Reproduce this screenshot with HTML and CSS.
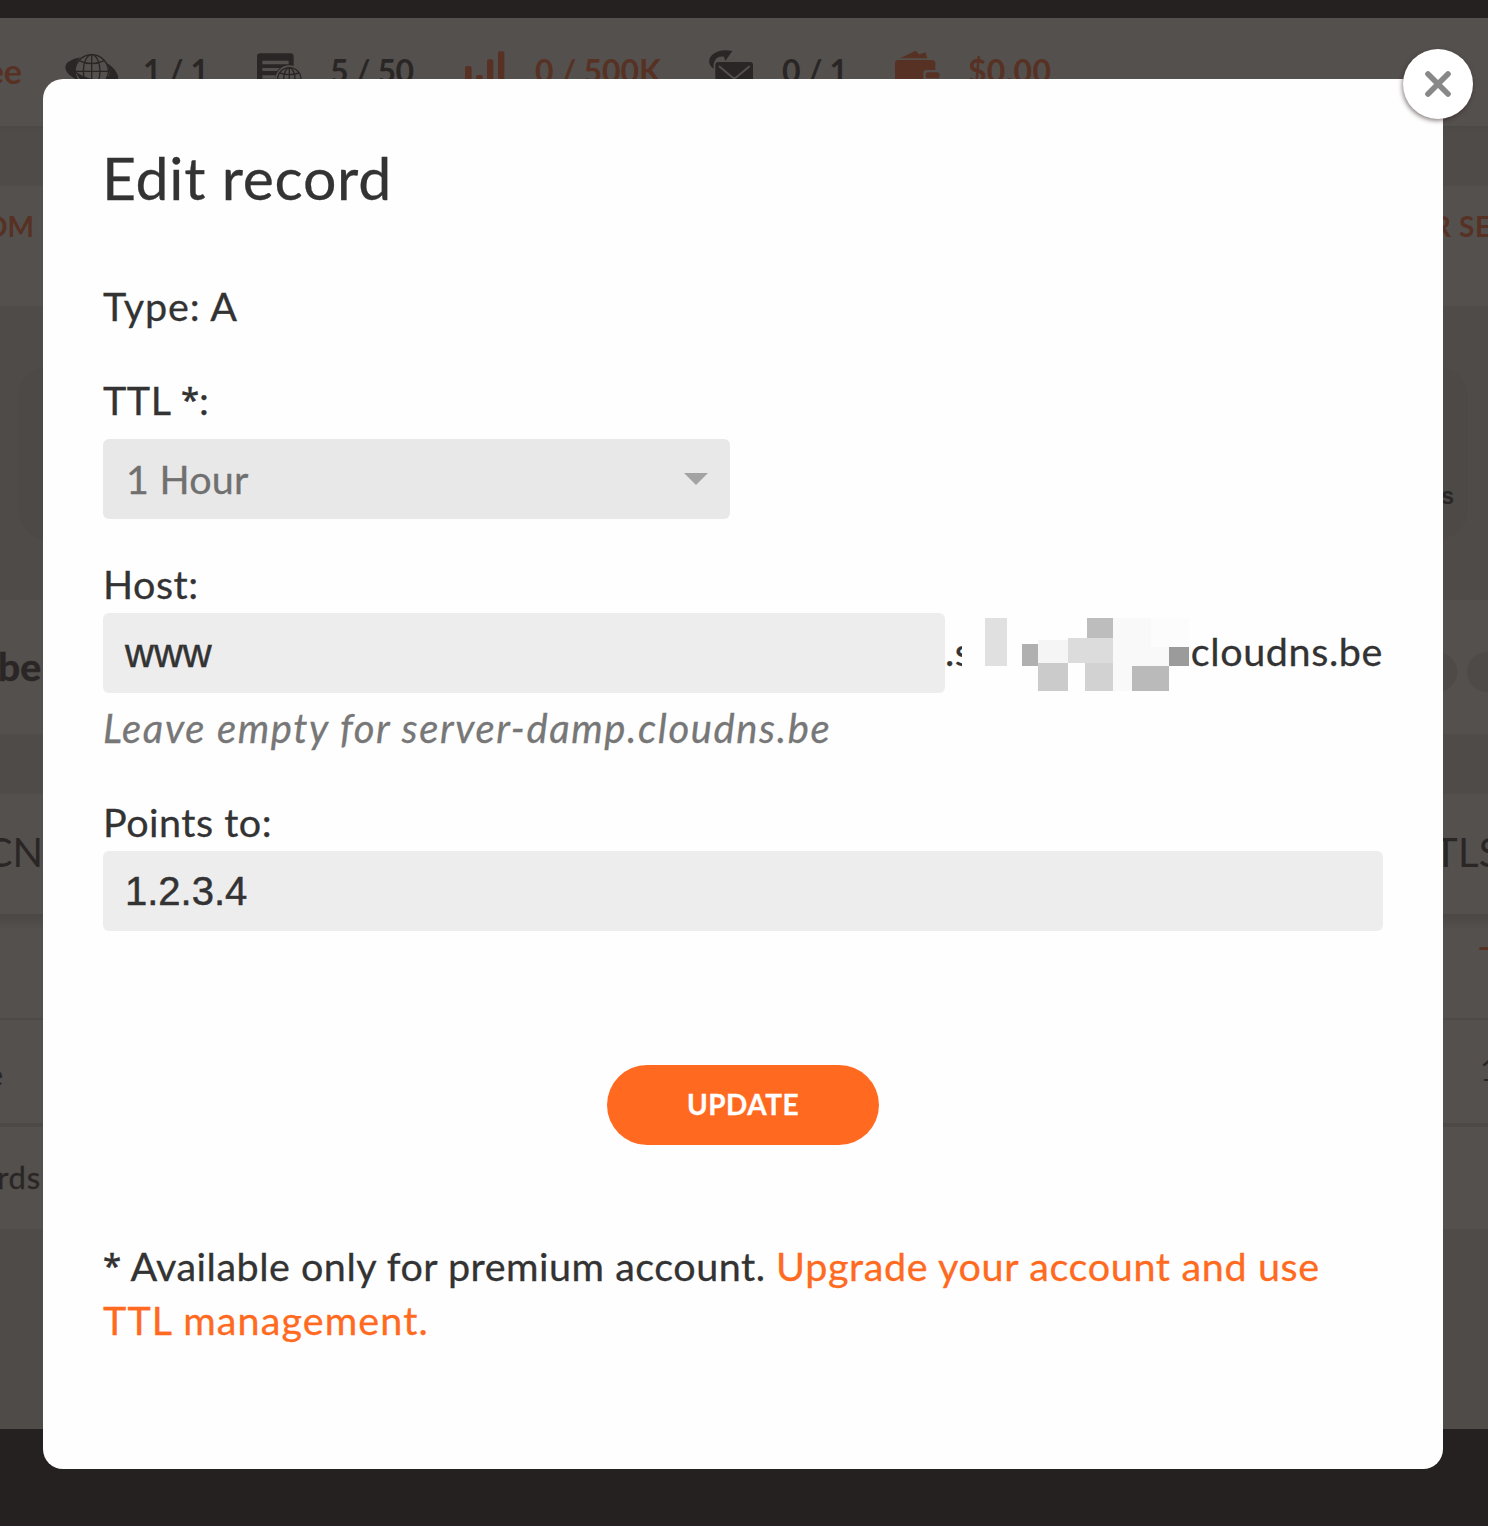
FILE: index.html
```
<!DOCTYPE html>
<html lang="en">
<head>
<meta charset="utf-8">
<title>Edit record</title>
<link rel="stylesheet" href="styles.css">
</head>
<body>
<div class="page">
  <div class="topbar"></div>
  <div class="status">
    <div class="plan accent">ee</div>
    <div class="stat stat-zones">
      <svg width="55" height="30" viewBox="195 150 165 90">
        <path class="fill" d="M242 172C215 177 195 188 196 203C198 219 214 231 230 238L236 250H350L355 232C352 215 338 200 321 190C328 204 329 216 327 228C300 236 250 232 226 214C224 198 230 182 242 172Z"/>
        <circle class="bg" cx="275" cy="214" r="48"/>
        <g class="line"><circle cx="275" cy="214" r="50"/><ellipse cx="275" cy="214" rx="25" ry="50"/><path d="M275 164V260M225 214H325M237 182Q275 200 313 182"/></g>
        <path class="fill" d="M223 210C238 226 262 235 285 238H240Z"/>
      </svg>
      <span>1 / 1</span>
    </div>
    <div class="stat stat-records">
      <svg width="45" height="30" viewBox="770 150 135 90">
        <rect class="fill" x="770" y="160" width="110" height="100" rx="10"/>
        <path class="gap" d="M786 182H865V193H786ZM786 204H838L830 213H786ZM786 226H826V236H786Z"/>
        <circle class="bg" cx="867" cy="238" r="42"/>
        <g class="line"><circle cx="867" cy="238" r="35"/><ellipse cx="867" cy="238" rx="17" ry="35"/><path d="M867 203V270M838 219Q867 229 896 219M832 238H902"/></g>
      </svg>
      <span>5 / 50</span>
    </div>
    <div class="stat stat-queries accent">
      <svg width="40" height="30" viewBox="75 150 120 90">
        <path class="fill" d="M75 260V203Q75 198 80 198H90Q95 198 95 203V260ZM108 260V230Q108 225 113 225H123Q128 225 128 230V260ZM141 260V183Q141 178 146 178H155Q160 178 160 183V260ZM174 260V159Q174 154 179 154H188Q193 154 193 159V260Z"/>
      </svg>
      <span>0 / 500K</span>
    </div>
    <div class="stat stat-mail">
      <svg width="45" height="30" viewBox="806 150 135 90">
        <path class="fill" d="M820 206C804 196 802 178 815 165C829 152 850 148 876 153L855 183L851 170C832 166 817 180 820 206Z"/>
        <rect class="fill" x="825" y="186" width="113" height="80" rx="9"/>
        <path class="fold" d="M838 200L876 232Q882 237 888 232L926 200"/>
      </svg>
      <span>0 / 1</span>
    </div>
    <div class="stat stat-balance accent">
      <svg width="45" height="30" viewBox="105 150 135 90">
        <path class="fill" d="M120 175L167 152L177 163L197 157L202 175Z"/>
        <rect class="fill" x="105" y="180" width="121" height="80" rx="10"/>
        <rect class="bg" x="190" y="210" width="56" height="50" rx="10"/>
        <rect class="fill" x="197" y="217" width="42" height="18" rx="8"/>
      </svg>
      <span>$0.00</span>
    </div>
  </div>
  <div class="band band-gap"></div>
  <div class="band band-links accent">
    <div class="edge left">OM</div>
    <div class="edge right">R SE</div>
  </div>
  <div class="band band-panel">
    <div class="panel"><span>s</span></div>
  </div>
  <div class="band band-zone">
    <div class="edge left">be</div>
    <div class="edge right"><i class="dot"></i><i class="dot"></i></div>
  </div>
  <div class="band band-space"></div>
  <div class="band band-tabs">
    <div class="edge left">CN</div>
    <div class="edge right">TLS</div>
  </div>
  <div class="band band-head accent"><i class="dash"></i></div>
  <div class="band band-row">
    <div class="edge left">e</div>
    <div class="edge right">1</div>
  </div>
  <div class="band band-total">
    <div class="edge left">rds</div>
  </div>
  <div class="band band-rest"></div>
  <div class="footer"></div>
</div>

<div class="modal">
  <button class="close" aria-label="Close">
    <svg width="28" height="28" viewBox="0 0 28 28"><path d="M4 4L24 24M24 4L4 24"/></svg>
  </button>
  <h1>Edit record</h1>
  <div class="text type">Type: A</div>
  <div class="text ttl">TTL <span class="star">*</span>:</div>
  <div class="select"><span>1 Hour</span><i class="arrow"></i></div>
  <div class="text host">Host:</div>
  <div class="host-row">
    <div class="input">www</div>
    <span class="domain-start">.s</span>
    <svg class="mosaic" width="227" height="73" viewBox="0 0 227 73" shape-rendering="crispEdges">
      <rect width="227" height="73" fill="#fefefe"/>
      <rect x="23" width="22" height="48" fill="#e0e0e0"/>
      <rect x="60" y="26" width="16" height="22" fill="#b0b0b0"/>
      <rect x="76" y="22" width="30" height="23" fill="#f5f5f5"/>
      <rect x="106" y="20" width="45" height="25" fill="#dcdcdc"/>
      <rect x="125" width="26" height="20" fill="#bdbdbd"/>
      <rect x="151" width="76" height="48" fill="#f9f9f9"/>
      <rect x="151" y="48" width="19" height="25" fill="#f9f9f9"/>
      <rect x="189" width="38" height="29" fill="#fcfcfc"/>
      <rect x="76" y="45" width="30" height="28" fill="#cbcbcb"/>
      <rect x="123" y="45" width="28" height="28" fill="#d2d2d2"/>
      <rect x="170" y="48" width="37" height="25" fill="#bababa"/>
      <rect x="207" y="29" width="20" height="19" fill="#9b9b9b"/>
    </svg>
    <span class="domain-end">cloudns.be</span>
  </div>
  <div class="hint">Leave empty for server-damp.cloudns.be</div>
  <div class="text points">Points to:</div>
  <div class="input address">1.2.3.4</div>
  <button class="update">UPDATE</button>
  <p class="note"><span class="star">*</span> Available only for premium account. <a>Upgrade your account and use<br><span class="last">TTL management.</span></a></p>
</div>
</body>
</html>
```
FILE: styles.css
```
* { box-sizing: border-box; }
body {
  margin: 0;
  font-family: Lato, "Liberation Sans", sans-serif;
  color: #333;
}
.page {
  --light: #54504e;
  --dark: #4f4b49;
  --ink: #2a2625;
  height: 1526px;
  overflow: hidden;
  display: flex;
  flex-direction: column;
  background: var(--dark);
  color: var(--ink);
}
.topbar { height: 18px; background: #252120; }
.footer { flex: 1; background: #252120; }
.accent { --ink: #573224; color: #573224; }

/* account status strip */
.status {
  height: 108px;
  padding-top: 32px;
  display: grid;
  grid-template-columns: 65px 192px 208px 244px 186px 1fr;
  background: var(--light);
  font-size: 32px;
  font-weight: 700;
  line-height: 40px;
}
.plan { width: 22px; display: flex; justify-content: flex-end; overflow: hidden; font-size: 34px; height: 46px; padding-top: 1px; }
.stat { display: flex; white-space: nowrap; }
.stat span { padding-top: 1px; letter-spacing: -.4px; }
.stat-queries span { letter-spacing: -.1px; }
.stat-balance span { letter-spacing: .3px; }
.stat svg { flex: none; overflow: visible; margin-right: 23px; }
.stat-records svg, .stat-mail svg { margin-right: 28px; }
.stat-queries svg { margin-right: 30px; }
.stat-balance svg { margin-right: 28px; }
.fill { fill: var(--ink); }
.bg, .gap { fill: var(--light); }
.line { fill: none; stroke: var(--ink); stroke-width: 4; }
.fold { fill: none; stroke: var(--light); stroke-width: 6; stroke-linecap: round; }

/* horizontal bands of the page behind the dialog */
.band { flex: none; display: flex; justify-content: space-between; background: var(--light); overflow: hidden; }
.edge { display: flex; white-space: nowrap; }
.left { width: 43px; justify-content: flex-end; }
.right { width: 45px; }
.band-gap { height: 60px; background: linear-gradient(#4c4846, var(--dark) 4px); }
.band-links { height: 120px; padding-top: 23px; font-size: 28px; font-weight: 700; line-height: 34px; }
.band-links .left { padding-right: 9px; }
.band-links .right { margin-left: -12px; width: 55px; letter-spacing: .6px; }
.band-panel { height: 294px; padding: 60px 20px 60px 18px; background: var(--dark); }
.panel {
  flex: 1;
  height: 174px;
  border-radius: 32px;
  background: #4d4947;
  display: flex;
  justify-content: flex-end;
  padding: 117px 14px 0 0;
  font: 700 23px/26px "Liberation Sans", sans-serif;
}
.band-zone { height: 134px; padding-top: 42px; font-size: 39px; font-weight: 700; line-height: 48px; }
.band-zone .left { padding-right: 2px; -webkit-text-stroke: .6px var(--ink); }
.band-zone .right { gap: 10px; width: 71px; padding-top: 10px; }
.dot { flex: none; width: 40px; height: 40px; border-radius: 50%; background: #4e4a48; }
.band-space { height: 60px; background: var(--dark); }
.band-tabs { height: 120px; padding-top: 34px; font-size: 40px; line-height: 48px; }
.band-tabs .right { width: 54px; letter-spacing: .3px; }
.band-head {
  height: 106px;
  border-bottom: 2px solid #4d4947;
  background: linear-gradient(#4b4745, var(--light) 16px);
  justify-content: flex-end;
  padding-top: 33px;
}
.dash { width: 9px; height: 3px; border-radius: 2px 0 0 2px; background: #573224; }
.band-row { height: 107px; border-bottom: 4px solid #4d4947; padding-top: 34px; font-size: 31px; line-height: 40px; }
.band-row .left { padding-right: 40px; }
.band-row .right { padding-left: 37px; margin-top: -5px; }
.band-total { height: 102px; padding-top: 30px; font-size: 31px; line-height: 40px; }
.band-total .left { padding-right: 2px; letter-spacing: .8px; -webkit-text-stroke: .3px var(--ink); }
.band-rest { height: 200px; background: var(--dark); }

/* dialog */
.modal {
  position: absolute;
  left: 43px;
  top: 79px;
  width: 1400px;
  height: 1390px;
  padding: 59px 60px;
  border-radius: 20px;
  background: #fefefe;
  font-size: 39.5px;
  line-height: 54px;
  letter-spacing: .5px;
  -webkit-text-stroke: .3px;
}
.close {
  position: absolute;
  right: -30px;
  top: -30px;
  width: 70px;
  height: 70px;
  padding: 0;
  border: 0;
  border-radius: 50%;
  background: #fff;
  box-shadow: -1px 2px 4px rgba(40, 20, 20, .5);
  display: flex;
  align-items: center;
  justify-content: center;
}
.close path { stroke: #888; stroke-width: 5.6; stroke-linecap: round; }
h1 { margin: 0 0 61px -1px; font-size: 59px; font-weight: 400; line-height: 80px; letter-spacing: .7px; }
.star { position: relative; top: -3px; font-family: "Open Sans", sans-serif; font-size: 33px; font-weight: 600; line-height: 0; letter-spacing: 0; }
.type { margin-bottom: 40px; letter-spacing: .9px; }
.ttl { margin-bottom: 12px; }
.select {
  width: 627px;
  height: 80px;
  padding: 0 22px 0 23px;
  border-radius: 6px;
  background: #e8e8e8;
  color: #707070;
  display: flex;
  align-items: center;
  justify-content: space-between;
  letter-spacing: .2px;
}
.arrow { border: 12px solid transparent; border-top-color: #a3a3a3; border-bottom: 0; }
.host { margin: 38px 0 2px; }
.host-row { display: flex; }
.host-row .input { width: 842px; }
.domain-start { width: 17px; overflow: hidden; padding-top: 11px; }
.mosaic { margin-top: 5px; }
.domain-end { padding: 11px 0 0 2px; white-space: nowrap; letter-spacing: .6px; }
.input {
  height: 80px;
  padding-left: 22px;
  border-radius: 6px;
  background: #ededed;
  font: 40px/80px "Liberation Sans", sans-serif;
  letter-spacing: 0;
  -webkit-text-stroke: .5px #333;
}
.hint { margin: 8px 0 40px; font-size: 40px; font-style: italic; color: #777; letter-spacing: 1.6px; }
.points { margin-bottom: 2px; }
.update {
  display: block;
  width: 272px;
  height: 80px;
  padding: 0 0 2px;
  margin: 134px auto 94px;
  border: 0;
  border-radius: 40px;
  background: #ff6a20;
  color: #fff;
  font: 700 28px Lato, sans-serif;
  letter-spacing: .5px;
}
.note { margin: 0; }
.note a { color: #ff6a20; letter-spacing: .64px; }
.note .last { letter-spacing: 1.1px; }
```
